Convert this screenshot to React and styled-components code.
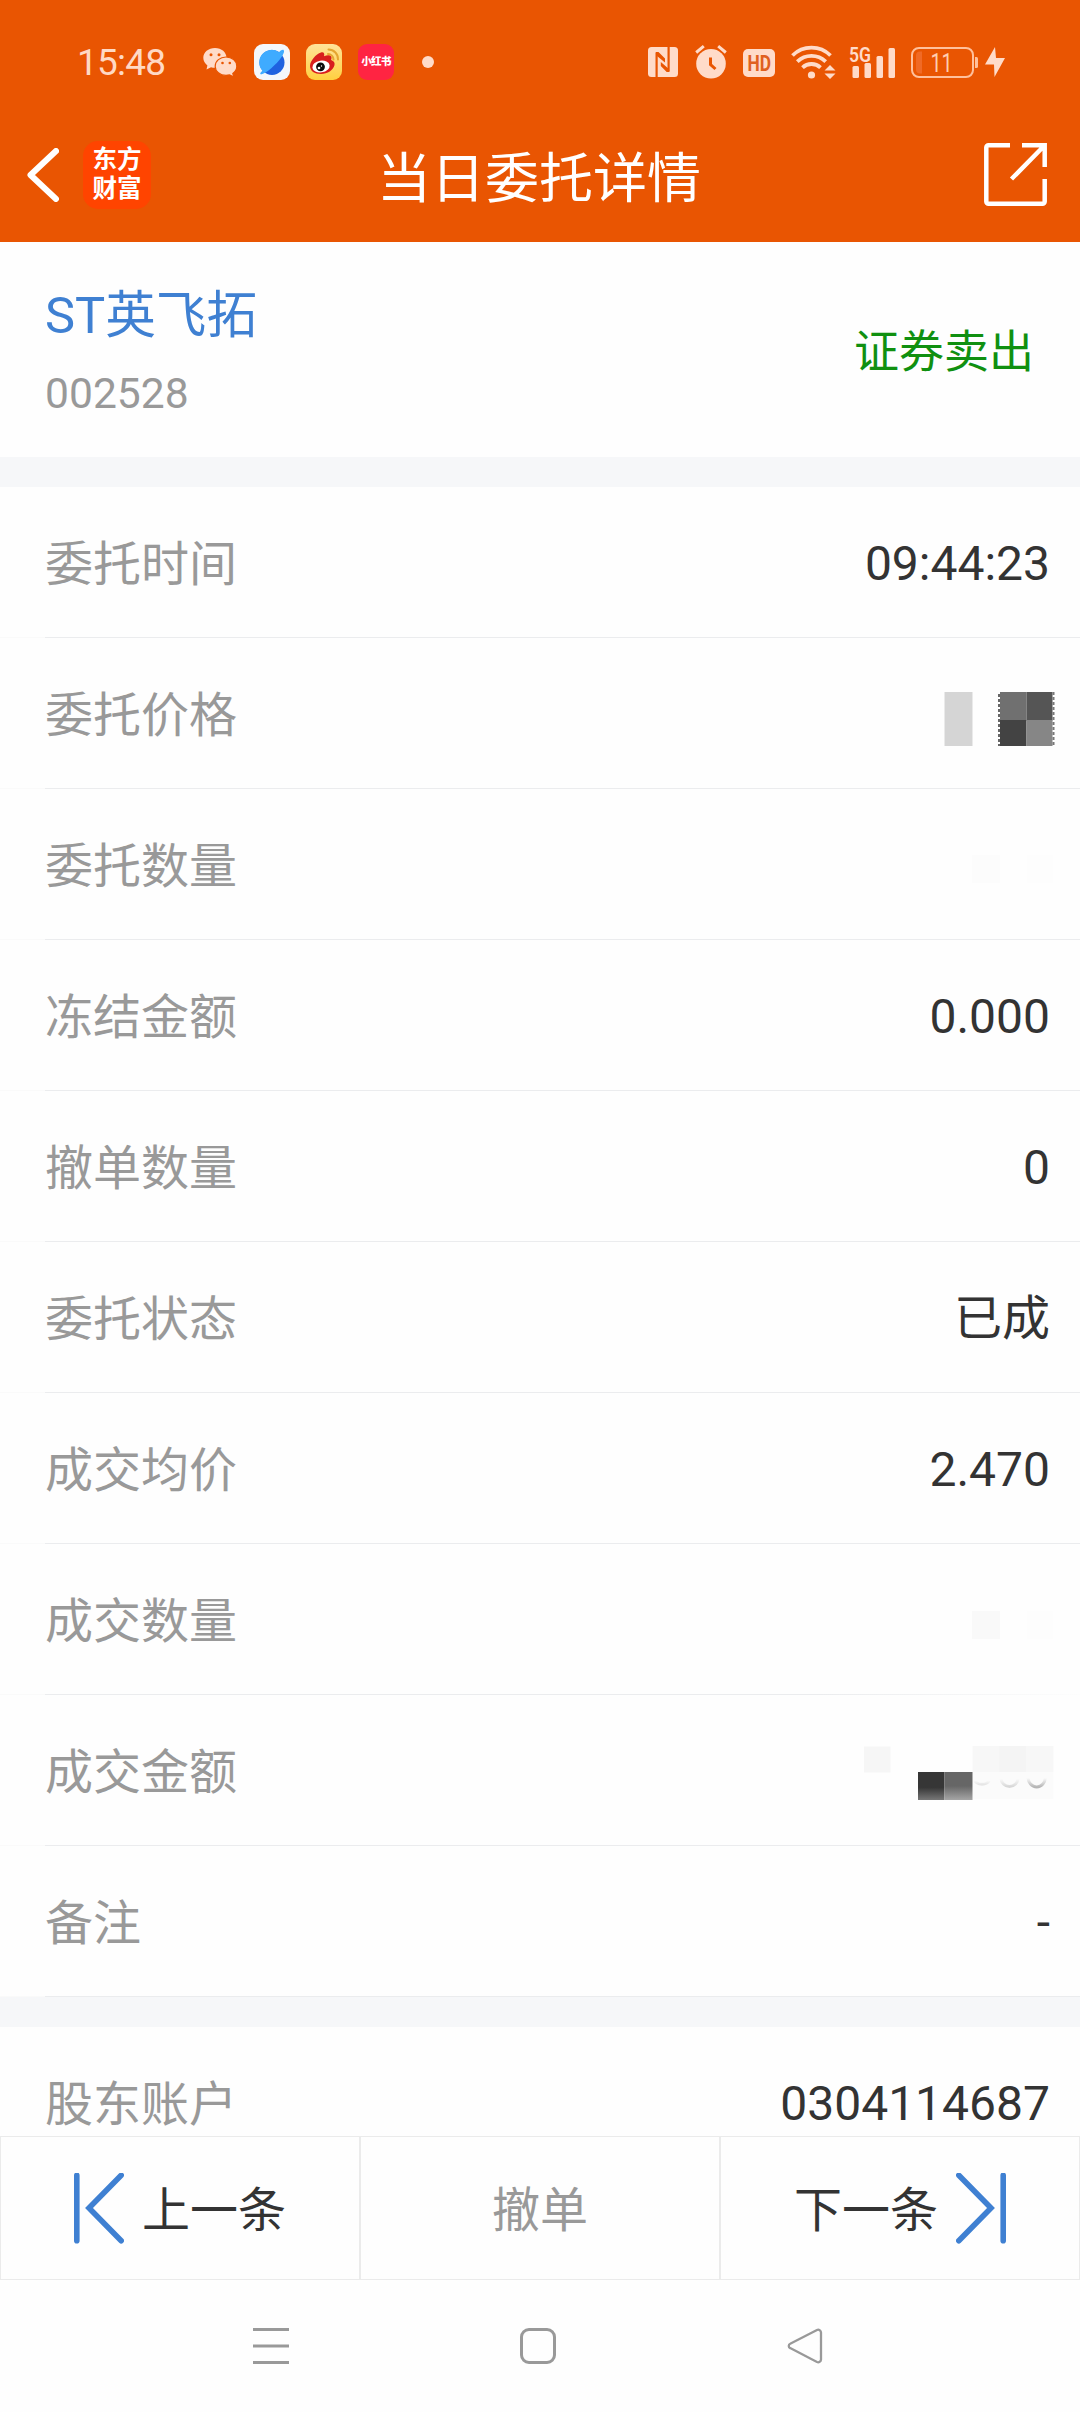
import React from 'react';
import styled, { createGlobalStyle } from 'styled-components';

const GlobalStyle = createGlobalStyle`
  * { box-sizing: border-box; }
  body {
    margin: 0;
    background: #fefefe;
    font-family: Roboto, "Noto Sans CJK SC", sans-serif;
    color: #333;
  }
  svg { display: block; flex: none; }
`;

const Screen = styled.div`
  width: 1080px;
  height: 2412px;
  display: flex;
  flex-direction: column;
  overflow: hidden;
`;

const Header = styled.header`
  flex: none;
  height: 242px;
  background: #e95502;
`;

const StatusBar = styled.div`
  height: 124px;
  padding: 0 75px 0 77px;
  display: flex;
  align-items: center;
  justify-content: space-between;
`;

const StatusGroup = styled.div`
  display: flex;
  align-items: center;
  gap: 16px;
`;

const Clock = styled.span`
  width: 110px;
  padding-top: 2px;
  font-size: 37px;
  line-height: 44px;
  letter-spacing: -0.8px;
  color: #ffd9c4;
`;

const AppTile = styled.span`
  width: 36px;
  height: 36px;
  border-radius: 9px;
  overflow: hidden;
  background: ${(p) => p.$bg};
  display: flex;
  align-items: center;
  justify-content: center;
  font-size: 10.5px;
  line-height: 36px;
  letter-spacing: -0.6px;
  font-weight: 900;
  white-space: nowrap;
  color: #fff;
`;

const MoreDot = styled.span`
  width: 12px;
  height: 12px;
  margin-left: 12px;
  border-radius: 50%;
  background: #ffdbc9;
`;

const TitleBar = styled.div`
  height: 118px;
  padding: 0 33px 0 27px;
  display: grid;
  grid-template-columns: 1fr auto 1fr;
  align-items: center;
`;

const TitleSide = styled.div`
  display: flex;
  align-items: center;
  gap: 24px;
  padding-bottom: 17px;
  justify-content: ${(p) => (p.$end ? 'flex-end' : 'flex-start')};
`;

const Title = styled.h1`
  margin: 0;
  padding: 0 0 7px 4px;
  font-size: 54px;
  line-height: 70px;
  font-weight: 400;
  color: #fff;
`;

const BrandLogo = styled.div`
  width: 68px;
  height: 68px;
  padding-top: 4px;
  border-radius: 15px;
  background: #ff4400;
  color: #fff;
  font-size: 24.5px;
  line-height: 29.5px;
  font-weight: 700;
  text-align: center;
`;

const Summary = styled.section`
  flex: none;
  height: 215px;
  padding: 3px 46px 0 45px;
  display: flex;
  justify-content: space-between;
  align-items: center;
`;

const StockName = styled.div`
  font-size: 50.6px;
  line-height: 70px;
  color: #3f80d2;
`;

const StockCode = styled.div`
  margin-top: 14px;
  font-size: 42.6px;
  line-height: 56px;
  color: #999;
`;

const Side = styled.div`
  font-size: 45px;
  line-height: 60px;
  padding-top: 4px;
  color: #109010;
`;

const Band = styled.div`
  flex: none;
  height: 30px;
  background: #f6f7f9;
`;

const List = styled.section`
  flex: none;
  height: ${(p) => (p.$clip ? `${p.$clip}px` : 'auto')};
  overflow: hidden;
`;

const Row = styled.div`
  height: 151px;
  padding: 0 30px 0 45px;
  display: flex;
  align-items: center;
  justify-content: space-between;
  background: linear-gradient(
      to right,
      #fafafa 45px,
      #ebecee 45px,
      #ebecee ${(p) => (p.$fade ? '820px' : '100%')},
      ${(p) => (p.$fade ? '#fdfdfd' : '#ebecee')} 100%
    )
    left bottom / 100% 1px no-repeat;
`;

const Label = styled.span`
  padding-top: 4px;
  font-size: 48px;
  line-height: 70px;
  color: #999;
`;

const Value = styled.span`
  padding-top: 3px;
  font-size: 48px;
  line-height: 70px;
  color: #333;
`;

const MosaicSvg = styled.svg`
  margin: ${(p) => p.$top}px -6px 0 0;
`;

const Actions = styled.footer`
  flex: none;
  height: 144px;
  display: grid;
  grid-template-columns: repeat(3, 1fr);
`;

const Action = styled.button`
  border: 1px solid #ebebeb;
  background: #fefefe;
  padding: 0;
  display: flex;
  align-items: center;
  justify-content: center;
  gap: 18px;
  font-family: inherit;
  font-size: 48px;
  line-height: 70px;
  color: ${(p) => (p.$muted ? '#999' : '#333')};
`;

const ActionText = styled.span`
  padding-top: 5px;
`;

const NavBar = styled.nav`
  flex: 1;
  padding: 0 257px 0 253px;
  display: flex;
  align-items: center;
  justify-content: space-between;
`;

const TINT = '#ffdbc9';

const WechatSvg = styled.svg`
  margin-right: 1px;
`;

const WechatIcon = () => (
  <WechatSvg width="34" height="30" viewBox="0 0 34 30">
    <path d="M12 1C5.4 1 .3 5.300 .3 10.800c0 3.100 1.600 5.800 4.100 7.600L3.500 22.500l4.500-2.300c1.300.4 2.500.5 4 .5 6.600 0 11.500-4.400 11.500-9.900S18.600 1 12 1z" fill={TINT} />
    <path d="M23 10c-6 0-10.800 4-10.800 9.200s4.800 9.200 10.800 9.200c1.300 0 2.500-.2 3.600-.5l4.200 2.100-1-3.600c2.500-1.700 4-4.200 4-7.200C33.800 14 29 10 23 10z" fill={TINT} stroke="#e95502" strokeWidth="1.200" />
    <g fill="#e95502">
      <circle cx="8" cy="7.800" r="1.500" /><circle cx="16" cy="7.800" r="1.500" />
      <circle cx="19.500" cy="16" r="1.300" /><circle cx="26.800" cy="16" r="1.300" />
    </g>
  </WechatSvg>
);

const BrowserIcon = () => (
  <svg width="36" height="36" viewBox="0 0 36 36">
    <circle cx="18" cy="18.500" r="12.500" fill="#1f62e0" />
    <path d="M8.500 26.800A12.500 12.500 0 0 1 25 8.200c2.200-2.200 4-2.800 4.700-2 1 1-.2 4-2.500 7.400C22.500 20.500 12 29.500 7.800 30.300c-2 .4-2.300-1.200.7-3.500z" fill="#3fabff" />
  </svg>
);

const WeiboIcon = () => (
  <svg width="36" height="36" viewBox="0 0 36 36">
    <path d="M4 22c0-5 6-12 11-13.500 3-.8 3.800 1.500 3 3.800 3-1.300 6.800-1.600 7.400.8.300 1 0 2-.3 2.800C28 17 29 18.500 28.500 21c-1 5-7 9-13.500 9S4 27 4 22z" fill="#d81e1e" />
    <ellipse cx="15" cy="22.500" rx="8.700" ry="5.900" fill="#fff" transform="rotate(-8 15 22.500)" />
    <circle cx="14.500" cy="22.800" r="4.400" fill="#0c0c0c" />
    <circle cx="13" cy="24" r="1.300" fill="#fff" /><circle cx="15.500" cy="22" r=".7" fill="#fff" />
    <path d="M22.500 5.500a9.500 9.500 0 0 1 9.500 10M22 10a5.500 5.500 0 0 1 5.500 5.500" fill="none" stroke="#e5a530" strokeWidth="2" strokeLinecap="round" />
  </svg>
);

const NfcSvg = styled.svg`
  margin-right: 1px;
`;

const NfcIcon = () => (
  <NfcSvg width="30" height="30" viewBox="0 0 30 30">
    <rect width="30" height="30" rx="3.500" fill={TINT} />
    <path d="M8.600 30V6M20.600 0V24" fill="none" stroke="#e95502" strokeWidth="2.200" />
    <path d="M7.500 5h3l6.500 6.500v4L9 9zM21.700 25h-3L12.800 19v-4l7.500 6.500z" fill="#e95502" />
  </NfcSvg>
);

const AlarmIcon = () => (
  <svg width="32" height="34" viewBox="0 0 32 34">
    <circle cx="16" cy="18.800" r="14.800" fill={TINT} />
    <path d="M1.200 7.500L8.800 1.200M30.800 7.500L23.200 1.200" stroke={TINT} strokeWidth="3" />
    <path d="M15.500 12.500v7l5 4.500" fill="none" stroke="#e95502" strokeWidth="3" />
  </svg>
);

const HdSvg = styled.svg`
  margin-top: 2px;
`;

const HdIcon = () => (
  <HdSvg width="32" height="28" viewBox="0 0 32 28">
    <rect width="32" height="28" rx="5" fill={TINT} />
    <text x="4.500" y="22" fontFamily="Roboto" fontSize="22.500" fontWeight="700" textLength="23.500" lengthAdjust="spacingAndGlyphs" fill="#e06020">HD</text>
  </HdSvg>
);

const WifiIcon = () => (
  <svg width="45" height="34" viewBox="0 0 45 34">
    <g fill="none" stroke={TINT} strokeWidth="3.800">
      <path d="M1.500 10.500a27 27 0 0 1 38 0" />
      <path d="M6.300 16.600a20.500 20.500 0 0 1 28.400 0" />
      <path d="M11.500 22.600a13 13 0 0 1 18 0" />
    </g>
    <circle cx="20.500" cy="30" r="3.600" fill={TINT} />
    <path d="M33.500 25.500h11L39 20zM33.500 28.500h11L39 34z" fill={TINT} />
  </svg>
);

const SignalSvg = styled.svg`
  margin-left: -3px;
`;

const SignalIcon = () => (
  <SignalSvg width="46" height="46" viewBox="0 -8 46 46">
    <text x="0" y="15" fontFamily="Roboto" fontSize="20.500" fontWeight="600" textLength="22" lengthAdjust="spacingAndGlyphs" fill={TINT}>5G</text>
    <g fill={TINT}>
      <rect x="3.500" y="19" width="6.500" height="12" rx="1.500" />
      <rect x="15.500" y="16" width="6.500" height="15" rx="1.500" />
      <rect x="27.500" y="9" width="6.500" height="22" rx="1.500" />
      <rect x="39.500" y="1" width="6.500" height="30" rx="1.500" />
    </g>
  </SignalSvg>
);

const Battery = () => (
  <svg width="67" height="31" viewBox="0 0 67 31">
    <rect x="1" y="1" width="61" height="29" rx="7" fill="none" stroke="#ffc09c" strokeWidth="2" />
    <path d="M11 4.500v22H9a4 4 0 0 1-4-4v-14a4 4 0 0 1 4-4z" fill="#f06a26" />
    <path d="M64 10h1.500a1.500 1.500 0 0 1 1.500 1.500v8a1.500 1.500 0 0 1-1.500 1.500H64z" fill="#ffc09c" />
    <text x="30.500" y="24.500" textAnchor="middle" fontFamily="Roboto" fontSize="25" textLength="22" lengthAdjust="spacingAndGlyphs" fill="#ffcdb0">11</text>
  </svg>
);

const BoltSvg = styled.svg`
  margin-left: -9px;
`;

const BoltIcon = () => (
  <BoltSvg width="20" height="30" viewBox="0 0 20 30">
    <path d="M10 0L0 17.500h9L9.500 30 20 11h-9z" fill={TINT} />
  </BoltSvg>
);

const BackIcon = () => (
  <svg width="32" height="54" viewBox="0 0 32 54">
    <path d="M29 3L3.500 27 29 51" fill="none" stroke="#fff" strokeWidth="6" strokeLinecap="round" strokeLinejoin="round" />
  </svg>
);

const ShareIcon = () => (
  <svg width="63" height="63" viewBox="0 0 63 63">
    <g fill="none" stroke="#fff" strokeWidth="4.500">
      <path d="M26 2.300H4.500a2.200 2.200 0 0 0-2.200 2.200v54a2.200 2.200 0 0 0 2.200 2.200h54a2.200 2.200 0 0 0 2.200-2.200V36" />
      <path d="M38 2.300h22.700V24M60 3L27.500 36" />
    </g>
  </svg>
);

const EdgeArrow = ({ flip }) => (
  <svg width="50" height="71" viewBox="0 0 50 71">
    <g transform={flip ? 'translate(50 0) scale(-1 1)' : undefined} fill="none" stroke="#3f80d2" strokeWidth="5.600" strokeLinecap="round" strokeLinejoin="miter">
      <path d="M2.800 2.300v65.400M47.200 2.300L15 35 47.200 67.700" />
    </g>
  </svg>
);

const PriceMosaic = () => (
  <MosaicSvg $top={11} width="112" height="54" viewBox="944 692 112 54">
    <rect x="944.500" y="692" width="28" height="54" fill="#d5d5d5" />
    <rect x="1000" y="692" width="26.500" height="28.500" fill="#707070" />
    <rect x="1026.500" y="692" width="26" height="28.500" fill="#555" />
    <rect x="1000" y="720" width="26.500" height="26" fill="#434343" />
    <rect x="1026.500" y="720" width="26" height="26" fill="#868686" />
    <path d="M999 694v52" stroke="#666" strokeWidth="2" strokeDasharray="3 2" />
    <path d="M1053.500 692v54" stroke="#777" strokeWidth="2" strokeDasharray="3 2" />
  </MosaicSvg>
);

const FaintMosaic = ({ tone, edge, top }) => (
  <MosaicSvg $top={top} width="84" height="28" viewBox="972 0 84 28">
    <rect x="972" width="28" height="28" fill={tone} />
    <rect x="1027" width="26" height="28" fill={edge} />
  </MosaicSvg>
);

const AmountMosaic = () => (
  <MosaicSvg $top={5} width="192" height="56" viewBox="864 1745 192 56">
    <defs>
      <linearGradient id="amountDark" x1="0" y1="0" x2="0" y2="1">
        <stop offset=".55" stopColor="#363636" /><stop offset="1" stopColor="#777" />
      </linearGradient>
      <linearGradient id="amountMid" x1="0" y1="0" x2="0" y2="1">
        <stop offset=".5" stopColor="#666" /><stop offset="1" stopColor="#a5a5a5" />
      </linearGradient>
      <linearGradient id="arcFade" x1="0" y1="0" x2="0" y2="1">
        <stop offset=".1" stopColor="#bbb" stopOpacity="0" /><stop offset="1" stopColor="#b5b5b5" />
      </linearGradient>
    </defs>
    <rect x="864" y="1746.500" width="26.500" height="26" fill="#f6f6f6" />
    <rect x="972.500" y="1746" width="81" height="26" fill="#f7f7f7" />
    <rect x="999.500" y="1746" width="26.500" height="26" fill="#f4f4f4" />
    <rect x="972.500" y="1772" width="81" height="27" fill="#fbfbfb" />
    <rect x="918" y="1772" width="26.500" height="28" fill="url(#amountDark)" />
    <rect x="944.500" y="1772" width="28" height="28" fill="url(#amountMid)" />
    <g fill="none" stroke="url(#arcFade)" strokeWidth="3">
      <path d="M974.500 1780a8 6.500 0 0 0 15 0" opacity=".3" />
      <path d="M1001 1778a8.500 8.500 0 0 0 17 0" opacity=".5" />
      <path d="M1028 1777a8.700 10 0 0 0 17.400 0" />
    </g>
  </MosaicSvg>
);

const rows = [
  { label: '委托时间', value: '09:44:23' },
  { label: '委托价格', mosaic: <PriceMosaic /> },
  { label: '委托数量', mosaic: <FaintMosaic tone="#fcfcfc" edge="#fdfdfd" top={8} /> },
  { label: '冻结金额', value: '0.000' },
  { label: '撤单数量', value: '0' },
  { label: '委托状态', value: '已成' },
  { label: '成交均价', value: '2.470' },
  { label: '成交数量', mosaic: <FaintMosaic tone="#f9f9f9" edge="#fdfdfd" top={10} />, fade: true },
  { label: '成交金额', mosaic: <AmountMosaic /> },
  { label: '备注', value: '-' },
];

export default function App() {
  return (
    <Screen>
      <GlobalStyle />
      <Header>
        <StatusBar>
          <StatusGroup>
            <Clock>15:48</Clock>
            <WechatIcon />
            <AppTile $bg="#f4f7fb"><BrowserIcon /></AppTile>
            <AppTile $bg="linear-gradient(#ffe39a, #ffd040)"><WeiboIcon /></AppTile>
            <AppTile $bg="#ff2442">小红书</AppTile>
            <MoreDot />
          </StatusGroup>
          <StatusGroup>
            <NfcIcon />
            <AlarmIcon />
            <HdIcon />
            <WifiIcon />
            <SignalIcon />
            <Battery />
            <BoltIcon />
          </StatusGroup>
        </StatusBar>
        <TitleBar>
          <TitleSide>
            <BackIcon />
            <BrandLogo>东方<br />财富</BrandLogo>
          </TitleSide>
          <Title>当日委托详情</Title>
          <TitleSide $end><ShareIcon /></TitleSide>
        </TitleBar>
      </Header>

      <Summary>
        <div>
          <StockName>ST英飞拓</StockName>
          <StockCode>002528</StockCode>
        </div>
        <Side>证券卖出</Side>
      </Summary>
      <Band />
      <List>
        {rows.map((r) => (
          <Row key={r.label} $fade={r.fade}>
            <Label>{r.label}</Label>
            {r.mosaic || <Value>{r.value}</Value>}
          </Row>
        ))}
      </List>
      <Band />
      <List $clip={109}>
        <Row>
          <Label>股东账户</Label>
          <Value>0304114687</Value>
        </Row>
      </List>

      <Actions>
        <Action><EdgeArrow /><ActionText>上一条</ActionText></Action>
        <Action $muted><ActionText>撤单</ActionText></Action>
        <Action><ActionText>下一条</ActionText><EdgeArrow flip /></Action>
      </Actions>

      <NavBar>
        <svg width="36" height="36" viewBox="0 0 36 36">
          <path d="M0 1.500h36M0 18h36M0 34.500h36" stroke="#999" strokeWidth="3" />
        </svg>
        <svg width="36" height="36" viewBox="0 0 36 36">
          <rect x="1.500" y="1.500" width="33" height="33" rx="7.500" fill="none" stroke="#999" strokeWidth="3" />
        </svg>
        <svg width="36" height="36" viewBox="0 0 36 36">
          <path d="M30 2L3.200 15.700a2.400 2.400 0 0 0 0 4.400L30 34a2.800 2.800 0 0 0 4-2.500V4.500A2.800 2.800 0 0 0 30 2z" fill="none" stroke="#999" strokeWidth="2.300" />
        </svg>
      </NavBar>
    </Screen>
  );
}
